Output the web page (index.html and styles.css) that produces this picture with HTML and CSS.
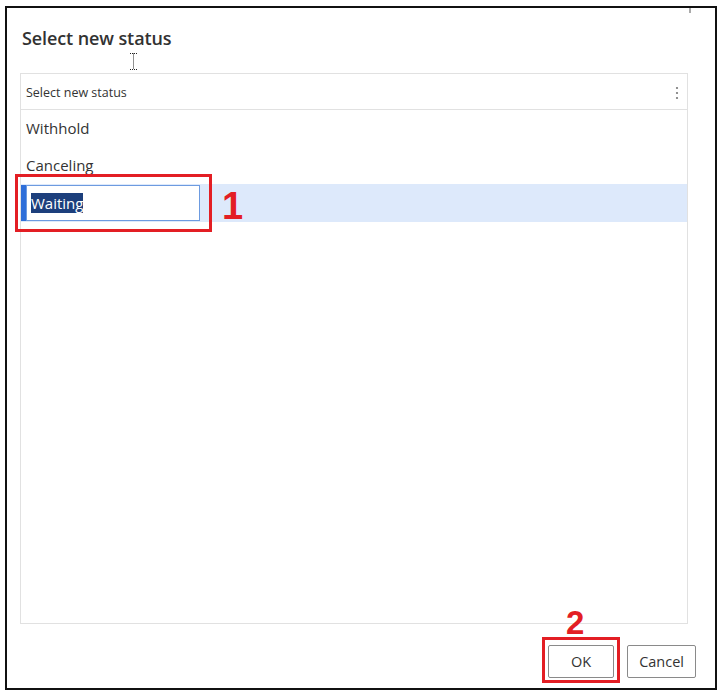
FILE: index.html
```html
<!DOCTYPE html>
<html>
<head>
<meta charset="utf-8">
<link rel="stylesheet" href="styles.css">
</head>
<body>
<div class="frame">
  <span class="corner-mark"></span>
  <h1 class="title">Select new status</h1>
  <svg class="ibeam" width="9" height="19" viewBox="0 0 9 19">
    <path d="M1 1.5h7M1 17.5h7M4.5 1.5v16" stroke="#222" stroke-width="1" stroke-dasharray="1 1" fill="none"/>
  </svg>
  <div class="grid">
    <div class="grid-head">
      <span class="head-label">Select new status</span>
      <svg class="more" width="4" height="14" viewBox="0 0 4 14">
        <circle cx="2" cy="2" r="1.1" fill="#777"/>
        <circle cx="2" cy="7" r="1.1" fill="#777"/>
        <circle cx="2" cy="12" r="1.1" fill="#777"/>
      </svg>
    </div>
    <div class="row">Withhold</div>
    <div class="row">Canceling</div>
    <div class="row selected">
      <span class="indicator"></span>
      <span class="cell-input"><span class="sel-text">Waiting</span></span>
    </div>
  </div>
  <div class="footer">
    <button class="btn">OK</button>
    <button class="btn">Cancel</button>
  </div>
  <div class="callout callout-1"></div>
  <span class="callout-num num-1">1</span>
  <div class="callout callout-2"></div>
  <span class="callout-num num-2">2</span>
</div>
</body>
</html>
```
FILE: styles.css
```css
html, body {
  margin: 0;
  padding: 0;
  background: #fff;
}
body {
  font-family: "Open Sans", "Noto Sans", sans-serif;
  color: #333;
}
.frame {
  position: relative;
  box-sizing: border-box;
  margin: 6px 0 0 5px;
  width: 712px;
  height: 684px;
  border: 2px solid #111;
  padding: 18px 19px 0 13px;
  display: flex;
  flex-direction: column;
}
.corner-mark {
  position: absolute;
  left: 682px;
  top: 0;
  width: 2px;
  height: 5px;
  background: #aaa;
}
.title {
  margin: 0 0 0 2px;
  font-size: 18px;
  line-height: 24px;
  font-weight: 600;
  color: #323232;
  letter-spacing: -0.1px;
}
.ibeam {
  position: absolute;
  left: 122px;
  top: 44px;
}
.grid {
  margin-top: 23px;
  box-sizing: border-box;
  width: 668px;
  height: 551px;
  border: 1px solid #e1e1e1;
  display: flex;
  flex-direction: column;
}
.grid-head {
  height: 36px;
  box-sizing: border-box;
  border-bottom: 1px solid #e1e1e1;
  display: flex;
  align-items: center;
  justify-content: space-between;
  padding: 2px 8px 0 5px;
}
.head-label {
  font-size: 12.5px;
  color: #333;
}
.more {
  display: block;
}
.row {
  height: 37px;
  display: flex;
  align-items: center;
  padding-left: 5px;
  padding-bottom: 2px;
  box-sizing: border-box;
  font-size: 15px;
  color: #333;
}
.row.selected {
  height: 38px;
  padding-left: 0;
  background: #dde9fb;
  align-items: stretch;
  padding-top: 1px;
  padding-bottom: 1px;
}
.indicator {
  width: 5px;
  background: #2f6fd9;
}
.cell-input {
  box-sizing: border-box;
  width: 174px;
  background: #fff;
  border: 1px solid #6d9be0;
  display: flex;
  align-items: center;
  padding-left: 4px;
}
.sel-text {
  background: #1d3f7c;
  color: #fff;
  font-size: 15px;
  line-height: 20px;
}
.footer {
  display: flex;
  justify-content: flex-end;
  gap: 13px;
  margin-top: 21px;
}
.btn {
  box-sizing: border-box;
  height: 33px;
  min-width: 66px;
  padding: 0 11px;
  background: #fff;
  border: 1px solid #8a8a8a;
  border-radius: 2px;
  font-family: "Open Sans", "Noto Sans", sans-serif;
  font-size: 14.5px;
  color: #333;
}
.callout {
  position: absolute;
  border: 3px solid #e31e24;
  box-sizing: border-box;
}
.callout-1 {
  left: 8px;
  top: 166px;
  width: 197px;
  height: 58px;
}
.callout-2 {
  left: 535px;
  top: 629px;
  width: 78px;
  height: 46px;
}
.callout-num {
  position: absolute;
  color: #e31e24;
  font-family: "Liberation Sans", sans-serif;
  font-weight: 700;
  line-height: 1;
}
.num-1 {
  left: 215px;
  top: 179px;
  font-size: 38px;
}
.num-2 {
  left: 559px;
  top: 598px;
  font-size: 33px;
}
```
